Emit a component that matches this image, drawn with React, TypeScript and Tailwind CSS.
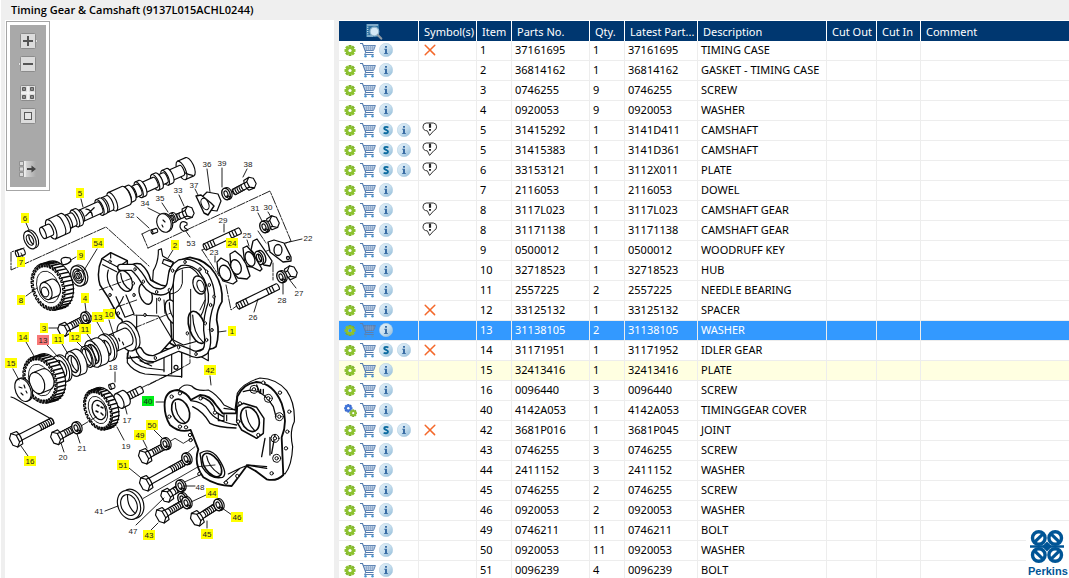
import React from "react";

type Sym = "x" | "note";
type Part = {
  item: string;
  no: string;
  qty: number;
  latest: string;
  desc: string;
  sym?: Sym;
  sup?: boolean;
  kit?: boolean;
  state?: "selected" | "hover";
};

const PARTS: Part[] = [
  { item: "1", no: "37161695", qty: 1, latest: "37161695", desc: "TIMING CASE", sym: "x" },
  { item: "2", no: "36814162", qty: 1, latest: "36814162", desc: "GASKET - TIMING CASE" },
  { item: "3", no: "0746255", qty: 9, latest: "0746255", desc: "SCREW" },
  { item: "4", no: "0920053", qty: 9, latest: "0920053", desc: "WASHER" },
  { item: "5", no: "31415292", qty: 1, latest: "3141D411", desc: "CAMSHAFT", sym: "note", sup: true },
  { item: "5", no: "31415383", qty: 1, latest: "3141D361", desc: "CAMSHAFT", sym: "note", sup: true },
  { item: "6", no: "33153121", qty: 1, latest: "3112X011", desc: "PLATE", sym: "note", sup: true },
  { item: "7", no: "2116053", qty: 1, latest: "2116053", desc: "DOWEL" },
  { item: "8", no: "3117L023", qty: 1, latest: "3117L023", desc: "CAMSHAFT GEAR", sym: "note" },
  { item: "8", no: "31171138", qty: 1, latest: "31171138", desc: "CAMSHAFT GEAR", sym: "note" },
  { item: "9", no: "0500012", qty: 1, latest: "0500012", desc: "WOODRUFF KEY" },
  { item: "10", no: "32718523", qty: 1, latest: "32718523", desc: "HUB" },
  { item: "11", no: "2557225", qty: 2, latest: "2557225", desc: "NEEDLE BEARING" },
  { item: "12", no: "33125132", qty: 1, latest: "33125132", desc: "SPACER", sym: "x" },
  { item: "13", no: "31138105", qty: 2, latest: "31138105", desc: "WASHER", state: "selected" },
  { item: "14", no: "31171951", qty: 1, latest: "31171952", desc: "IDLER GEAR", sym: "x", sup: true },
  { item: "15", no: "32413416", qty: 1, latest: "32413416", desc: "PLATE", state: "hover" },
  { item: "16", no: "0096440", qty: 3, latest: "0096440", desc: "SCREW" },
  { item: "40", no: "4142A053", qty: 1, latest: "4142A053", desc: "TIMINGGEAR COVER", kit: true },
  { item: "42", no: "3681P016", qty: 1, latest: "3681P045", desc: "JOINT", sym: "x", sup: true },
  { item: "43", no: "0746255", qty: 3, latest: "0746255", desc: "SCREW" },
  { item: "44", no: "2411152", qty: 3, latest: "2411152", desc: "WASHER" },
  { item: "45", no: "0746255", qty: 2, latest: "0746255", desc: "SCREW" },
  { item: "46", no: "0920053", qty: 2, latest: "0920053", desc: "WASHER" },
  { item: "49", no: "0746211", qty: 11, latest: "0746211", desc: "BOLT" },
  { item: "50", no: "0920053", qty: 11, latest: "0920053", desc: "WASHER" },
  { item: "51", no: "0096239", qty: 4, latest: "0096239", desc: "BOLT" },
];

/* ---------- table icons ---------- */

function Cog({ cx, cy, r, color, dark }: { cx: number; cy: number; r: number; color: string; dark: string }) {
  return (
    <g transform={`translate(${cx} ${cy})`}>
      {[0, 45, 90, 135].map((a) => (
        <rect key={a} x={-r} y={-r * 0.26} width={r * 2} height={r * 0.52} fill={a > 45 ? dark : color} transform={`rotate(${a})`} />
      ))}
      <circle r={r * 0.54} fill="none" stroke={color} strokeWidth={r * 0.5} />
      <circle r={r * 0.29} fill="#fff" />
    </g>
  );
}

function GearIcon({ kit, selected }: { kit?: boolean; selected?: boolean }) {
  return (
    <svg viewBox="0 0 13 13" className="block h-[13px] w-[13px]">
      {kit ? (
        <>
          <Cog cx={4.3} cy={4.3} r={4.2} color="#3f74d8" dark="#2f5fc4" />
          <Cog cx={9.2} cy={9.2} r={3.8} color="#8cbf33" dark="#76a82a" />
        </>
      ) : (
        <>
          <Cog cx={6} cy={6.5} r={5.5} color="#8cc22f" dark="#7db02b" />
          {selected && <circle cx="6" cy="6.5" r="1.7" fill="#3399ff" />}
        </>
      )}
    </svg>
  );
}

function CartIcon({ selected }: { selected?: boolean }) {
  const ink = selected ? "#5b7fae" : "#4f78ad";
  return (
    <svg viewBox="0 0 16 16" className="block h-4 w-4" fill="none">
      <path d="M4 3.5h11.3l-1.900 5H5.500z" fill={selected ? "#5f86b8" : "#d3dfed"} />
      <path d="M0 1.500h2.500L5.800 10.500h7.700" stroke={ink} strokeWidth="1.100" />
      <path d="M3.400 3.500h12l-1.900 5H5.200" stroke={ink} strokeWidth=".9" />
      <path d="M4 5.200h10.600M4.600 6.900h9.400M6.500 3.500v5M8.500 3.500v5M10.500 3.500v5M12.500 3.500v5" stroke="#7d9cc5" strokeWidth=".6" />
      <path d="M5.800 10.500 4.500 12.500h9.300" stroke={ink} strokeWidth=".9" />
      <circle cx="5.500" cy="14.300" r="1.200" fill="#4a97d3" />
      <circle cx="12.500" cy="14.300" r="1.200" fill="#4a97d3" />
    </svg>
  );
}

function Badge({ kind }: { kind: "i" | "s" }) {
  return (
    <svg viewBox="0 0 14 14" className="block h-[14px] w-[14px]">
      <defs>
        <linearGradient id="badge" x1="0" y1="0" x2="1" y2="1">
          <stop offset="0" stopColor="#e4f0f8" />
          <stop offset=".5" stopColor="#c9e0ef" />
          <stop offset="1" stopColor="#8db9d8" />
        </linearGradient>
      </defs>
      <circle cx="7" cy="7" r="6.700" fill="url(#badge)" stroke="#a9c8df" strokeWidth=".5" />
      {kind === "i" ? (
        <path d="M6 2.900h2v1.800H6zM5.300 5.700H8v4.400h.8v1H5.200v-1H6V6.700h-.7z" fill="#3b6ea5" />
      ) : (
        <path d="M9.300 4.600C8.400 3.700 5.300 3.400 5.200 5.200 5.100 7 9.100 6.700 9 8.800 8.900 10.700 5.800 10.600 4.700 9.600" fill="none" stroke="#0b6a9f" strokeWidth="1.900" />
      )}
    </svg>
  );
}

function SymbolIcon({ kind }: { kind: Sym }) {
  return kind === "x" ? (
    <svg viewBox="0 0 12 12" className="ml-[2px] block h-3 w-3" role="img" aria-label="Not serviced">
      <path d="M1.200 1.200 10.600 10.600M10.800 1.200 1.200 10.800" stroke="#f4682a" strokeWidth="1.500" strokeLinecap="round" />
    </svg>
  ) : (
    <svg viewBox="0 0 16 15" className="block h-[15px] w-4" role="img" aria-label="Note">
      <path d="M4.200 1h7.200q3.200.4 3.200 3.800 0 3-2.800 3.900L7.600 13.400 5.400 8.900Q1 8.600 1 4.800 1 1.400 4.200 1z" fill="#fff" stroke="#333" strokeWidth="1" />
      <path d="M8 1.600v4.200" stroke="#222" strokeWidth="2.200" />
      <path d="M8 7v1.700" stroke="#222" strokeWidth="2" />
    </svg>
  );
}

function IconButton({ label, children }: { label: string; children: React.ReactNode }) {
  return (
    <button type="button" aria-label={label} className="block shrink-0 cursor-pointer">
      {children}
    </button>
  );
}

/* ---------- parts table ---------- */

const HEADS = ["Symbol(s)", "Item", "Parts No.", "Qty.", "Latest Part...", "Description", "Cut Out", "Cut In", "Comment"];

function PartsTable() {
  return (
    <table className="w-full table-fixed border-separate border-spacing-0 text-[11px] leading-[17px]">
      <colgroup>
        <col className="w-[80px]" />
        <col className="w-[58px]" />
        <col className="w-[35px]" />
        <col className="w-[78px]" />
        <col className="w-[35px]" />
        <col className="w-[73px]" />
        <col className="w-[129px]" />
        <col className="w-[50px]" />
        <col className="w-[44px]" />
        <col />
      </colgroup>
      <thead>
        <tr className="h-5 bg-[#003770] text-left text-white">
          <th className="border-r border-white p-0">
            <svg viewBox="0 0 18 17" className="ml-[26px] block h-[17px] w-[18px]" role="img" aria-label="Actions">
              <rect x="1" y="1" width="13" height="13" fill="#2c6f9f" />
              <path d="M2 2h11M2 4.200h1.400M2 6.400h1.400M2 8.600h1.400M2 10.800h1.400M2 13h6" stroke="#cfe3f0" strokeWidth="1" />
              <circle cx="9.400" cy="8.600" r="4.400" fill="#d5e8f5" stroke="#8fb4cc" strokeWidth="1.200" />
              <path d="M12.800 12l3.400 3.600" stroke="#8f9ba6" strokeWidth="2.200" strokeLinecap="round" />
            </svg>
          </th>
          {HEADS.map((h, i) => (
            <th key={h} className={"overflow-hidden whitespace-nowrap py-0 pr-0 pl-[5px] font-normal " + (i < HEADS.length - 1 ? "border-r border-white" : "")}>
              {h}
            </th>
          ))}
        </tr>
      </thead>
      <tbody>
        {PARTS.map((p, n) => {
          const sel = p.state === "selected";
          const row = sel ? "h-5 bg-[#3399ff] text-white" : p.state === "hover" ? "h-5 bg-[#ffffe1]" : "h-5 bg-white";
          const cell = "overflow-hidden whitespace-nowrap border-r border-b border-[#ededed] pt-0 pr-0 pb-[2px] pl-[3px]";
          return (
            <tr key={n} className={row} aria-selected={sel}>
              <td className="border-r border-b border-[#ededed] pt-0 pr-0 pb-px pl-[5px]">
                <div className="flex items-center gap-1">
                  <div className="flex items-center gap-[3px]">
                    <IconButton label="Part options">
                      <GearIcon kit={p.kit} selected={sel} />
                    </IconButton>
                    <IconButton label="Add to cart">
                      <CartIcon selected={sel} />
                    </IconButton>
                    <IconButton label={p.sup ? "Supersession" : "Information"}>
                      <Badge kind={p.sup ? "s" : "i"} />
                    </IconButton>
                  </div>
                  {p.sup && (
                    <IconButton label="Information">
                      <Badge kind="i" />
                    </IconButton>
                  )}
                </div>
              </td>
              <td className={cell}>{p.sym && <SymbolIcon kind={p.sym} />}</td>
              <td className={cell}>{p.item}</td>
              <td className={cell}>{p.no}</td>
              <td className={cell}>{p.qty}</td>
              <td className={cell}>{p.latest}</td>
              <td className={cell}>{p.desc}</td>
              <td className={cell} />
              <td className={cell} />
              <td className="border-b border-[#ededed] p-0" />
            </tr>
          );
        })}
      </tbody>
    </table>
  );
}

/* ---------- zoom toolbar ---------- */

function Tool({ label, className, children }: { label: string; className: string; children: React.ReactNode }) {
  return (
    <button type="button" aria-label={label} className={"block cursor-pointer " + className}>
      <svg viewBox="0 0 20 16" className="block h-4 w-5">
        {children}
      </svg>
    </button>
  );
}

function Toolbar() {
  const face = <rect x="2.500" y=".5" width="15" height="15" rx="1" fill="#dcdcdc" stroke="#8b8b8b" />;
  return (
    <div role="toolbar" aria-label="Zoom" className="absolute top-px left-px w-[44px] border border-[#a6a6a6] bg-white p-[3px]">
      <div className="flex h-[162px] flex-col items-center bg-[#a9a9a9] pt-2">
        <Tool label="Zoom in" className="mb-[7px]">
          <path d="M17 5l3 3-3 3z" fill="#e4e4e4" stroke="#8b8b8b" strokeWidth=".6" />
          {face}
          <path d="M5 8h10M10 3v10" stroke="#555" strokeWidth="2" />
        </Tool>
        <Tool label="Zoom out" className="mb-[13px]">
          <path d="M3 5L0 8l3 3z" fill="#e4e4e4" stroke="#8b8b8b" strokeWidth=".6" />
          {face}
          <path d="M5 8h10" stroke="#555" strokeWidth="2" />
        </Tool>
        <Tool label="Fit all" className="mb-[7px]">
          {face}
          <path d="M10 1v14M3 8h14" stroke="#f4f4f4" strokeWidth="1.600" />
          <path d="M4.500 2.500h3v3h-3zM12.500 2.500h3v3h-3zM4.500 10.500h3v3h-3zM12.500 10.500h3v3h-3z" fill="#8a8a8a" stroke="#5b5b5b" />
        </Tool>
        <Tool label="Actual size" className="mb-[37px]">
          {face}
          <rect x="6.500" y="4.500" width="7" height="7" fill="#e6e6e6" stroke="#5b5b5b" />
        </Tool>
        <Tool label="Toggle list" className="">
          <defs>
            <linearGradient id="fade" x1="0" x2="1" y1="0" y2="0">
              <stop offset="0" stopColor="#dadada" />
              <stop offset="1" stopColor="#a9a9a9" />
            </linearGradient>
          </defs>
          <rect x="7" y="0" width="11" height="16" fill="url(#fade)" />
          <path d="M1.500 .500h4v4h-4zM1.500 6h4v4h-4zM1.500 11.500h4v4h-4z" fill="#dadada" stroke="#858585" strokeWidth=".8" />
          <path d="M6.800 0v16" stroke="#f8f8f8" strokeWidth="1.300" />
          <path d="M9 8H15" stroke="#444" strokeWidth="2" />
          <path d="M13.500 4.500L18 8l-4.500 3.500z" fill="#444" />
        </Tool>
      </div>
    </div>
  );
}

/* ---------- exploded diagram ---------- */

type CylProps = { a: number; b: number; r: number; k?: number };
function Cyl({ a, b, r, k = 0.4 }: CylProps) {
  return (
    <>
      <path d={`M${a} ${-r}L${b} ${-r}A${r * k} ${r} 0 0 1 ${b} ${r}L${a} ${r}`} />
      <ellipse cx={a} cy={0} rx={r * k} ry={r} />
    </>
  );
}

type BoltProps = { x: number; y: number; to: [number, number]; head?: number; r?: number };
function Bolt({ x, y, to, head = 6.5, r = 3.2 }: BoltProps) {
  const dx = to[0] - x;
  const dy = to[1] - y;
  const len = Math.hypot(dx, dy);
  const ang = (Math.atan2(dy, dx) * 180) / Math.PI;
  const start = len > 30 ? len - 14 : 7;
  const threads: number[] = [];
  for (let s = start; s < len; s += 2.3) threads.push(s);
  const h = head;
  return (
    <g transform={`translate(${x} ${y}) rotate(${ang})`}>
      <Cyl a={2} b={len} r={r} />
      {threads.map((s) => (
        <path key={s} fill="none" d={`M${s} ${-r}A${r * 0.4} ${r} 0 0 1 ${s} ${r}`} />
      ))}
      <path d={`M-3 ${-h}L3 ${-h * 0.92}Q5.500 0 3 ${h * 0.92}L-3 ${h}Z`} />
      <path d={`M-3 ${-h}L1 ${-h * 0.5}L1 ${h * 0.5}L-3 ${h}L-6.500 ${h * 0.5}L-6.500 ${-h * 0.5}Z`} />
      <path fill="none" d={`M1 ${-h * 0.5}L4 ${-h * 0.45}M1 ${h * 0.5}L4 ${h * 0.45}`} />
    </g>
  );
}

type RingProps = { x: number; y: number; rx: number; ry: number; t?: number; rot?: number; inner?: number };
function Ring({ x, y, rx, ry, t = 2.5, rot = -20, inner = 0.58 }: RingProps) {
  return (
    <g transform={`translate(${x} ${y}) rotate(${rot})`}>
      <ellipse cx={t} cy={0} rx={rx} ry={ry} />
      <ellipse cx={0} cy={0} rx={rx} ry={ry} />
      {inner > 0 && (
        <>
          <ellipse cx={0} cy={0} rx={rx * inner} ry={ry * inner} />
          <path fill="none" d={`M${rx * inner * 0.3} ${-ry * inner * 0.9}Q${-rx * 0.2} 0 ${rx * inner * 0.3} ${ry * inner * 0.9}`} />
        </>
      )}
    </g>
  );
}

function SpringWasher({ x, y }: { x: number; y: number }) {
  return (
    <g transform={`translate(${x} ${y}) rotate(-20)`}>
      <ellipse cx={2} cy={0} rx={4} ry={6} />
      <ellipse cx={0} cy={0} rx={4} ry={6} strokeWidth="1.400" />
      <ellipse cx={0} cy={0} rx={1.800} ry={3.200} />
      <path d="M-1 2.500l3 3.500M0.500 2l3.500 3" fill="none" />
    </g>
  );
}

type WheelProps = { x: number; y: number; rx: number; ry: number; w: number; rot: number; n: number };
function ToothedWheel({ x, y, rx, ry, w, rot, n }: WheelProps) {
  const teeth: string[] = [];
  let rim = "";
  for (let i = 0; i < n; i++) {
    const t0 = (i / n) * Math.PI * 2;
    const step = (Math.PI * 2) / n;
    const pt = (t: number, f: number) => `${(Math.cos(t) * rx * f).toFixed(1)} ${(Math.sin(t) * ry * f).toFixed(1)}`;
    rim += `${i ? "L" : "M"}${pt(t0, 1)}L${pt(t0 + step * 0.5, 1)}L${pt(t0 + step * 0.55, 0.87)}L${pt(t0 + step * 0.95, 0.87)}`;
    if (Math.cos(t0) > -0.25) {
      const px = Math.cos(t0) * rx;
      const py = Math.sin(t0) * ry;
      teeth.push(`M${px.toFixed(1)} ${py.toFixed(1)}l${w} ${(w * 0.1).toFixed(1)}`);
    }
  }
  return (
    <g transform={`translate(${x} ${y}) rotate(${rot})`}>
      <path d={`M0 ${-ry}L${w} ${-ry}A${rx} ${ry} 0 0 1 ${w} ${ry}L0 ${ry}Z`} />
      <path d={teeth.join("")} fill="none" strokeWidth="1.500" />
      <path d={rim + "Z"} strokeWidth="1.200" />
      <ellipse cx={0} cy={0} rx={rx * 0.68} ry={ry * 0.68} strokeWidth=".8" />
    </g>
  );
}

type Tone = "none" | "yellow" | "red" | "green";
type Tag = [string, number, number, Tone?];

const TAGS: Tag[] = [
  ["5", 80, 193, "yellow"], ["6", 25, 218, "yellow"], ["7", 21, 262, "yellow"], ["9", 81, 255, "yellow"],
  ["54", 98, 243, "yellow"], ["8", 21, 300, "yellow"], ["4", 85, 298, "yellow"], ["3", 44, 328, "yellow"],
  ["13", 98, 317, "yellow"], ["10", 109, 314, "yellow"], ["11", 85, 329, "yellow"], ["12", 75, 337, "yellow"],
  ["11", 58, 339, "yellow"], ["13", 43, 340, "red"], ["14", 23, 337, "yellow"], ["15", 11, 363, "yellow"],
  ["16", 30, 461, "yellow"], ["2", 175, 245, "yellow"], ["24", 232, 243, "yellow"], ["1", 232, 331, "yellow"],
  ["42", 210, 370, "yellow"], ["40", 148, 401, "green"], ["50", 152, 425, "yellow"], ["49", 140, 435, "yellow"],
  ["51", 123, 465, "yellow"], ["44", 212, 493, "yellow"], ["43", 149, 535, "yellow"], ["45", 207, 534, "yellow"],
  ["46", 237, 517, "yellow"],
  ["36", 207, 164], ["39", 222, 163], ["38", 248, 164], ["37", 194, 185], ["33", 178, 190], ["35", 160, 198],
  ["34", 145, 203], ["32", 130, 215], ["53", 191, 243], ["29", 223, 220], ["23", 214, 252], ["25", 247, 235],
  ["31", 255, 208], ["30", 268, 207], ["22", 308, 238], ["27", 299, 293], ["28", 282, 300], ["26", 253, 317],
  ["18", 113, 367], ["17", 127, 420], ["19", 126, 446], ["20", 63, 457], ["21", 82, 448], ["41", 99, 511],
  ["47", 133, 531], ["48", 200, 487],
];

const TONES: Record<Tone, string> = { none: "none", yellow: "#ffff00", red: "#f87878", green: "#00ee18" };

function Diagram() {
  return (
    <svg viewBox="5 20 329 558" className="block h-[558px] w-[329px]" role="img" aria-label="Timing gear and camshaft exploded view">
      <g stroke="#0a0a0a" strokeWidth="1.150" fill="#fff" strokeLinejoin="round" strokeLinecap="round">
        {/* construction lines */}
        <g fill="none" strokeWidth=".9" strokeDasharray="9 1.500 2 1.500">
          <path d="M24 248L11 252V270L106 227L149 266" />
          <path d="M142 234L148 248M142 234L150 230M148 248L270 191L291 241L240 262" />
          <path d="M202 250L219 276M202 250L240 232M258 231L266 243" />
          <path d="M226 285L231 310L238 305M273 263V280" />
        </g>

        {/* camshaft */}
        <g transform="translate(43 233) rotate(-24.300)">
          <Cyl a={152} b={161} r={10} />
          <path fill="none" d="M150 -3Q153 4 160 9M147 -5L152 -2" />
          <Cyl a={139} b={152} r={5.500} />
          <Cyl a={134} b={139} r={8} />
          <Cyl a={128} b={134} r={5.500} />
          <Cyl a={123} b={127} r={8.500} />
          <Cyl a={110} b={123} r={5.500} />
          <Cyl a={105} b={109} r={8.500} />
          <Cyl a={99} b={105} r={6} />
          <Cyl a={92} b={97} r={8.500} />
          <Cyl a={76} b={91} r={10} />
          <Cyl a={68} b={73} r={8} />
          <Cyl a={62} b={66} r={8.500} />
          <Cyl a={42} b={62} r={6} />
          <path fill="none" strokeWidth="1.300" d="M49 -4Q54 -2 52 5M46 2L57 -2" />
          <Cyl a={35} b={39} r={9} />
          <Cyl a={28} b={33} r={7} />
          <Cyl a={9} b={24} r={10.500} />
          <path fill="none" d="M20 -10A4 10.500 0 0 1 20 10" />
          <Cyl a={0} b={8} r={6} />
        </g>

        {/* plate, dowel, key, hub */}
        <Ring x={30} y={240} rx={5.500} ry={9.500} rot={-25} />
        <g transform="translate(17 254) rotate(-20)"><Cyl a={0} b={7} r={3.200} /></g>
        <path d="M61 260Q62 256 70 258L71 261Q66 266 62 264Z" />
        <Ring x={78} y={276} rx={7} ry={10.500} rot={-20} inner={0.700} />
        <Ring x={78} y={276} rx={3.500} ry={5} rot={-20} />

        {/* camshaft gear */}
        <ToothedWheel x={48} y={287} rx={16} ry={24} w={9} rot={-18} n={34} />
        <g transform="translate(46 291) rotate(-22)"><Cyl a={0} b={9} r={9} k={0.620} /></g>
        <ellipse cx="45" cy="292" rx="3.500" ry="5" transform="rotate(-20 45 292)" />

        {/* timing case */}
        <g transform="translate(90 230) scale(.3333)" strokeWidth="3.500">
          <path d="M188 150L190 122Q206 95 205 60L214 56L218 78L250 97L240 125L238 170L215 190Z" />
          <path d="M221 88L250 97L243 112L217 100Z" />
          <path d="M112 370V398Q130 425 165 432L275 440V365L200 350Z" />
          <path d="M245 365V432M275 362V442M222 380V425" fill="none" />
          <path d="M330 340H355V392L330 378" fill="none" />
          <path d="M238 122Q250 92 300 82Q350 90 375 130Q400 170 396 215Q380 240 380 270Q390 310 378 350Q365 362 345 355L300 372L240 340Z" strokeWidth="5" />
          <path d="M36 86L62 68L112 92V116Q130 95 152 102Q175 120 182 150Q200 160 215 166L238 170L245 330L190 392L150 380L112 385L118 345L95 268Q80 262 75 240Q55 200 30 165Q18 125 36 86Z" strokeWidth="4.500" />
          <path d="M36 86L84 112L112 92M84 112L88 124L112 116M62 68V84M38 104L80 125M55 120Q45 150 68 180" fill="none" />
          <path d="M78 200L105 262L132 252L108 195M75 240Q95 215 100 200M132 255L205 258L265 358M140 255V345" fill="none" />
          <ellipse cx="104" cy="153" rx="21" ry="33" transform="rotate(-25 104 153)" strokeWidth="4" />
          <path d="M92 130Q95 165 122 180" fill="none" />
          <ellipse cx="167" cy="192" rx="18" ry="32" transform="rotate(-20 167 192)" strokeWidth="4" />
          <ellipse cx="248" cy="246" rx="20" ry="38" transform="rotate(-20 248 246)" strokeWidth="4" />
          <path d="M238 218Q238 255 262 278" fill="none" />
          <path d="M250 132Q270 110 300 112Q335 130 345 190Q350 230 330 262L335 330L280 345L250 330Z" />
          <ellipse cx="322" cy="292" rx="24" ry="50" transform="rotate(-18 322 292)" strokeWidth="5" />
          <path d="M308 255Q310 310 338 335" fill="none" />
          <ellipse cx="328" cy="165" rx="18" ry="28" transform="rotate(-20 328 165)" strokeWidth="4" />
          <ellipse cx="332" cy="168" rx="10" ry="18" transform="rotate(-20 332 168)" />
          <path d="M302 178V300M345 210L330 240M200 205V250M222 210L225 250M277 120V160Q270 190 240 192" fill="none" strokeWidth="3" />
          {/* machined face */}
          <path d="M92 112L128 112Q150 130 165 160Q182 186 212 186Q240 184 242 150Q244 112 270 98Q305 90 335 120Q370 165 364 218Q348 262 350 300Q358 345 346 364Q322 382 298 366L266 354L192 386Q160 388 148 362" fill="none" stroke="#0a0a0a" strokeWidth="22" />
          <path d="M92 112L128 112Q150 130 165 160Q182 186 212 186Q240 184 242 150Q244 112 270 98Q305 90 335 120Q370 165 364 218Q348 262 350 300Q358 345 346 364Q322 382 298 366L266 354L192 386Q160 388 148 362" fill="none" stroke="#fff" strokeWidth="14" />
          {[[60, 95], [135, 118], [160, 155], [200, 186], [238, 180], [248, 122], [285, 96], [330, 118], [358, 165], [362, 225], [346, 280], [350, 330], [318, 372], [266, 352], [196, 384], [60, 195], [130, 160], [132, 195], [208, 208], [85, 250], [165, 255], [292, 310], [350, 125], [372, 200], [366, 300]].map(([x, y]) => (
            <ellipse key={`${x}-${y}`} cx={x} cy={y} rx="3.500" ry="5" strokeWidth="3" />
          ))}
          <path d="M120 378Q130 405 170 414L222 420M150 392L185 408M140 380L165 400L190 398" fill="none" />
          <circle cx="258" cy="412" r="6" />
          <path d="M28 180L125 145M0 260L140 210M130 295L245 248M175 465L245 430L300 400V300" fill="none" strokeWidth="2.600" strokeDasharray="26 5 6 5" />
        </g>

        {/* idler stack */}
        <g transform="translate(113 343) rotate(-24)">
          <Cyl a={15} b={19} r={15} k={0.550} />
          <Cyl a={0} b={16} r={9} k={0.500} />
          <path d="M9 3v3M7 -2v3" fill="none" />
        </g>
        <Ring x={106} y={348} rx={7.500} ry={14} rot={-22} />
        <g transform="translate(93 354) rotate(-22)">
          <Cyl a={0} b={8} r={14} k={0.520} />
          <ellipse cx="0" cy="0" rx="5" ry="10" strokeWidth="1.500" />
          <path d="M-2 -8v16M1 -9v17" fill="none" />
        </g>
        <Ring x={87} y={357} rx={5} ry={11} rot={-22} inner={0.800} />
        <g transform="translate(73 364) rotate(-22)">
          <Cyl a={0} b={7} r={13} k={0.500} />
          <ellipse cx="0" cy="0" rx="4.500" ry="9" strokeWidth="1.400" />
          <path d="M1 -7Q-3 0 1 8" fill="none" />
        </g>
        <Ring x={61} y={369} rx={7.500} ry={14} rot={-22} inner={0.650} />
        <ToothedWheel x={40} y={380} rx={16} ry={24} w={9} rot={-20} n={34} />
        <g transform="translate(37 383) rotate(-22)"><Cyl a={0} b={10} r={11} k={0.650} /></g>
        <Ring x={23} y={390} rx={7.500} ry={12} rot={-22} t={1.500} inner={0} />
        <path d="M19 387l3 1M24 385l1 3M21 393l2 2M26 391l1 2M11 397l3 1L53 420" fill="none" />

        {/* compressor gear and shaft */}
        <g transform="translate(119 401) rotate(-27)">
          <Cyl a={10} b={25} r={3.500} />
          <path d="M14 -3.500v7M17 -3.500v7M20 -3.500v7" fill="none" />
          <Cyl a={0} b={7} r={8} k={0.500} />
        </g>
        <ToothedWheel x={98} y={410} rx={13} ry={21} w={7} rot={-22} n={30} />
        <ellipse cx="99" cy="410" rx="6.500" ry="10" transform="rotate(-20 99 410)" strokeWidth="1.300" />
        <path d="M97 405l2 1M101 407l2 1M96 411l2 1M101 413l2 2" fill="none" strokeWidth="1.500" />
        <g transform="translate(110 387) rotate(-20)"><Cyl a={0} b={4} r={2.500} /></g>
        <path d="M141 388L182 368M81 426L96 417" fill="none" strokeWidth=".9" strokeDasharray="8 2" />

        {/* hardware, left side */}
        <Bolt x={65} y={329} to={[86, 318]} head={6.500} />
        <SpringWasher x={85} y={318} />
        <Bolt x={17} y={439} to={[52, 421]} head={7.500} />
        <Bolt x={58} y={437} to={[75, 428]} head={7} />
        <SpringWasher x={76} y={428} />

        {/* drive flange group, upper right */}
        <Bolt x={249} y={184} to={[234, 192]} head={6} r={3} />
        <SpringWasher x={226} y={194} />
        <path d="M201 198L207 192L218 194L221 201L217 211L209 210Z" strokeWidth="1.200" />
        <path d="M196 196L201 195L211 203L214 206L208 215L204 213Z" strokeWidth="1.400" />
        <ellipse cx="205" cy="204" rx="3.500" ry="6" transform="rotate(-25 205 204)" />
        <Bolt x={187} y={213} to={[175, 218]} head={6} r={3} />
        <Ring x={172} y={218} rx={3} ry={5} t={2} />
        <Ring x={164} y={223} rx={7} ry={9.500} t={1.500} inner={0} />
        <path d="M163 220l2 2M162 225l1 2" fill="none" />
        <g transform="translate(152 232) rotate(-20)"><Cyl a={0} b={5} r={2} /></g>
        <path d="M187 223Q180 219 180 227Q182 233 188 230L185 228Q183 226 187 225Z" />
        <g transform="translate(205 247) rotate(-25)">
          <Cyl a={0} b={38} r={3.200} />
          <path d="M4 -3v6M7 -3v6M10 -3v6M28 -3v6M31 -3v6M34 -3v6" fill="none" />
        </g>
        <g transform="translate(238 306) rotate(-26)">
          <Cyl a={0} b={44} r={3.200} />
          <path d="M4 -3v6M7 -3v6M10 -3v6M33 -3v6M36 -3v6M39 -3v6" fill="none" />
        </g>
        <g strokeWidth="1.300">
          <path d="M268 242L274 240L284 243L291 257L291 261L283 262L270 252Z" />
          <ellipse cx="278" cy="250" rx="4" ry="5.500" />
          <circle cx="288" cy="258" r="1.500" />
          <path d="M253 241L257 239L272 261L270 266L264 265L251 250Z" />
          <Ring x={259} y={258} rx={4} ry={7} />
          <path d="M243 248L247 246L252 252L262 269L260 271L252 267L245 266Z" />
          <ellipse cx="250" cy="259" rx="4.500" ry="7.500" transform="rotate(-20 250 259)" />
          <path d="M230 254L235 251L241 256L246 264L250 276L247 279L238 278L231 270Z" />
          <ellipse cx="236" cy="267" rx="5" ry="7.500" transform="rotate(-20 236 267)" />
          <path d="M217 262L221 258L228 262L234 274L237 281L233 284L223 281L218 272Z" />
          <ellipse cx="225" cy="273" rx="5.500" ry="8" transform="rotate(-20 225 273)" />
        </g>
        <Bolt x={272} y={223} to={[264, 227]} head={6.500} r={2} />
        <SpringWasher x={264} y={227} />
        <Bolt x={290} y={273} to={[283, 277]} head={6.500} r={2} />
        <SpringWasher x={281} y={277} />

        {/* front cover */}
        <g transform="translate(100 350) scale(.3333)" strokeWidth="3.500">
          <path d="M235 122Q250 98 275 108Q290 125 325 120Q350 132 372 165L405 180L412 130Q430 98 480 84Q530 86 560 122Q586 160 583 215Q568 245 578 290Q576 345 555 372L380 300Z" />
          <path d="M194 160Q196 122 232 120Q262 128 272 150L300 135Q330 135 348 165L368 190L408 190L412 140Q430 100 470 96Q520 100 545 160Q565 215 545 262L550 375Q530 395 500 388L470 365L440 348L420 375L395 408Q350 408 310 382Q280 340 295 298L272 240Q240 250 210 225Q192 195 194 160Z" strokeWidth="5.500" />
          <path d="M272 152Q310 155 325 180Q345 215 410 225M278 170Q310 185 330 220Q350 232 408 234M300 140Q340 150 345 185L370 200" fill="none" strokeWidth="4" />
          <path d="M355 190V212H372V190M380 195V212M372 175L408 180" fill="none" />
          <ellipse cx="242" cy="184" rx="25" ry="38" transform="rotate(-22 242 184)" strokeWidth="5" />
          <path d="M226 158Q225 195 255 218" fill="none" />
          <path d="M412 170L430 160L470 172L492 205L490 250L470 265L425 240L410 215Z" strokeWidth="4.500" />
          <ellipse cx="450" cy="208" rx="26" ry="38" transform="rotate(-22 450 208)" strokeWidth="5" />
          <path d="M438 180Q440 220 465 243" fill="none" />
          <path d="M430 125Q480 105 520 170L528 200M470 105L480 130M482 118V130M490 118V130M495 265L485 320M510 262V315M525 255L515 310M440 345L500 355" fill="none" strokeWidth="4" />
          <path d="M300 310Q330 290 355 325Q385 370 368 382Q330 390 306 350Z" strokeWidth="4" />
          <ellipse cx="336" cy="345" rx="22" ry="40" transform="rotate(-35 336 345)" strokeWidth="5" />
          <path d="M320 318Q325 350 358 372" fill="none" />
          <path d="M372 398L420 355M385 372L420 355L445 345L500 350" fill="none" />
          {[[215, 140], [240, 130], [208, 200], [240, 230], [258, 232], [302, 145], [345, 188], [462, 118], [505, 145], [538, 200], [525, 265], [530, 325], [515, 370], [412, 378], [378, 398], [420, 160], [475, 255], [415, 215], [490, 98], [540, 128], [568, 185], [562, 245], [558, 295], [270, 255], [272, 270], [298, 372]].map(([x, y]) => (
            <circle key={`${x}-${y}`} cx={x} cy={y} r="5" strokeWidth="3" />
          ))}
          {[[462, 118], [505, 145], [538, 200], [525, 265], [530, 325]].map(([x, y]) => (
            <circle key={`${x}-${y}`} cx={x} cy={y} r="12" strokeWidth="3" fill="none" />
          ))}
          <path d="M200 280L225 265L250 280L275 265M260 310L285 290M130 445L295 350M295 350L345 345M245 400L300 375" fill="none" strokeWidth="2.500" />
        </g>

        {/* hardware, lower right */}
        <Bolt x={146} y={456} to={[163, 447]} head={7.500} />
        <SpringWasher x={165} y={444} />
        <Bolt x={147} y={483} to={[183, 463]} head={7.500} />
        <SpringWasher x={186} y={459} />
        <Bolt x={168} y={495} to={[179, 488]} head={6.500} />
        <SpringWasher x={180} y={486} />
        <SpringWasher x={182} y={499} />
        <Bolt x={163} y={515} to={[182, 504]} head={7.500} />
        <SpringWasher x={186} y={503} />
        <Bolt x={198} y={518} to={[215, 507]} head={7.500} />
        <SpringWasher x={218} y={505} />
        <Ring x={129} y={505} rx={11} ry={15} rot={-22} t={3.500} inner={0.720} />

        {/* leaders */}
        <path
          fill="none"
          strokeWidth=".9"
          d="M81 199L83 207M26 223L29 230M23 257L21 253M76 257L71 260M97 249L83 272M26 296L37 288M85 303L86 311M49 328L58 328M97 322L105 336M109 320L114 336M87 334L95 345M77 342L85 350M62 344L68 354M47 345L58 357M26 342L34 356M13 369L19 380M28 456L21 446M173 250L168 258M226 331L218 332M210 376L211 385M156 402L164 402M154 430L163 439M143 440L147 448M129 468L140 477M206 495L191 502M151 530L158 523M207 528V521M232 515L222 508M207 169L210 192M222 168V187M247 169L243 177M195 189L198 195M179 195L184 206M162 203L168 212M148 208L160 214M137 217L149 228M190 237L185 230M224 224V232M215 256V262M247 240L249 246M258 213L262 221M268 212L271 217M302 239L285 243M296 288L289 279M283 294L283 282M254 312L258 299M115 372V382M127 414L125 406M124 440L117 427M64 452L61 443M80 443L77 434M105 511L118 506M136 525L164 498M195 486L184 486"
        />
      </g>

      {/* callouts */}
      <g fontFamily='"Liberation Sans", Arial, sans-serif' fontSize="8" textAnchor="middle" fill="#222">
        {TAGS.map(([text, x, y, tone = "none"], i) => {
          const w = text.length > 1 ? 12 : 8;
          return (
            <g key={i}>
              {tone !== "none" && <rect x={x - w / 2} y={y - 5} width={w} height="10" fill={TONES[tone]} />}
              <text x={x} y={y + 3}>{text}</text>
            </g>
          );
        })}
      </g>
    </svg>
  );
}

/* ---------- brand mark ---------- */

function PerkinsMark() {
  const ring = (x: number, y: number, a: number) => (
    <g key={`${x}${y}`} transform={`translate(${x} ${y}) rotate(${a})`}>
      <circle r="6.300" fill="none" stroke="#005596" strokeWidth="3.400" />
      <path d="M0 -6V6" stroke="#005596" strokeWidth="3.200" />
    </g>
  );
  return (
    <div className="absolute right-0 bottom-0 flex w-[43px] flex-col items-start bg-white pt-2 pl-[2px]">
      <svg viewBox="0 0 34 35" className="ml-[2px] block h-[35px] w-[34px]" aria-hidden="true">
        <path d="M17 12.500l5 5-5 5-5-5z" fill="#005596" />
        <path d="M0 17.500h34" stroke="#005596" strokeWidth="2.400" />
        {ring(8.800, 9, 45)}
        {ring(25.200, 9, -45)}
        {ring(8.800, 26, -45)}
        {ring(25.200, 26, 45)}
      </svg>
      <span className="font-['Liberation_Sans',Arial,sans-serif] text-[11px] leading-[14px] font-bold text-[#005596]">Perkins</span>
    </div>
  );
}

export default function App() {
  return (
    <div className="flex h-screen flex-col overflow-hidden bg-white pl-px font-['Noto_Sans',Tahoma,sans-serif] text-black">
      <header className="h-5 shrink-0 bg-[#efefef] pl-[10px]">
        <h1 className="font-['Open_Sans',Tahoma,sans-serif] text-[11px] leading-5 font-semibold">Timing Gear &amp; Camshaft (9137L015ACHL0244)</h1>
      </header>
      <main className="flex min-h-0 flex-1 bg-[#efefef] pl-1">
        <section className="relative w-[329px] shrink-0 overflow-hidden bg-white" aria-label="Diagram">
          <Diagram />
          <Toolbar />
        </section>
        <section className="relative ml-[5px] min-w-0 flex-1 overflow-hidden bg-white pt-px" aria-label="Parts list">
          <PartsTable />
          <PerkinsMark />
        </section>
      </main>
    </div>
  );
}
